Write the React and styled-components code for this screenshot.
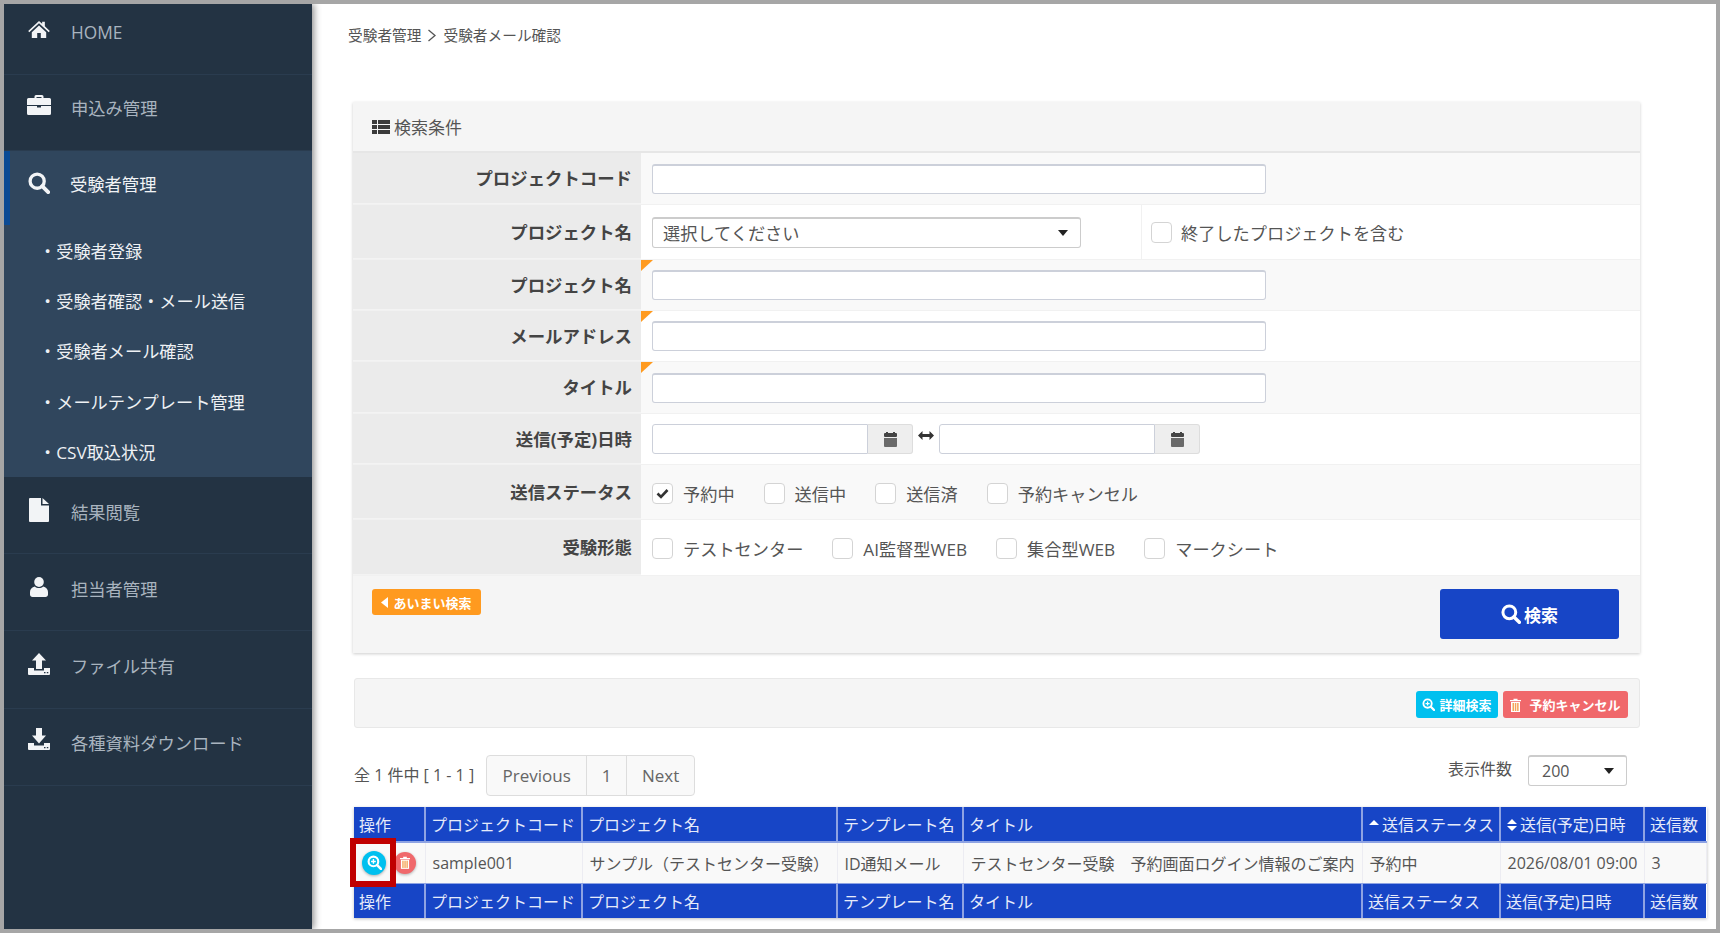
import React from 'react';
import styled, { createGlobalStyle } from 'styled-components';

const GlobalStyle = createGlobalStyle`
  html, body { margin: 0; padding: 0; background: #fff; }
  body {
    font-family: "Open Sans", "Noto Sans CJK JP", sans-serif;
    font-size: 16px;
    color: #555;
  }
  * { box-sizing: border-box; }
`;

const Frame = styled.div`
  width: 1720px;
  height: 933px;
  border: 4px solid #a6a6a6;
  display: flex;
  overflow: hidden;
  background: #fff;
`;

const Sidebar = styled.nav`
  width: 308px;
  flex: none;
  background: #233343;
  box-shadow: 2px 0 7px rgba(0, 0, 0, 0.45);
  position: relative;
  z-index: 2;
`;

const NavItem = styled.div`
  height: ${(p) => p.$h}px;
  display: flex;
  align-items: flex-start;
  border-bottom: ${(p) => (p.$active ? 'none' : '1px solid #2a3c4f')};
  border-left: ${(p) => (p.$active ? '6px solid #0a4a94' : 'none')};
  padding-left: ${(p) => (p.$active ? '17px' : '23px')};
  color: ${(p) => (p.$active ? '#f0f3f6' : '#a9b4bf')};
  font-size: 17.3px;
  line-height: 26px;
`;

const IconSlot = styled.span`
  width: 24px;
  height: 24px;
  margin-top: ${(p) => p.$top}px;
  flex: none;
  display: flex;
  align-items: center;
  justify-content: center;
  color: #f2f4f6;
  svg { display: block; fill: currentColor; }
`;

const NavText = styled.span`
  margin: ${(p) => p.$top}px 0 0 ${(p) => p.$left || 20}px;
`;

const ActiveGroup = styled.div`
  background: #30465d;
  height: 326px;
`;

const SubItem = styled.div`
  height: 50.4px;
  padding-left: 35px;
  display: flex;
  align-items: center;
  color: #eef1f4;
  font-size: 17.2px;
`;

const Main = styled.main`
  flex: 1;
  min-width: 0;
  padding: 0 0 0 36px;
`;

const Breadcrumb = styled.div`
  height: 98px;
  padding-top: 19px;
  font-size: 14.7px;
  line-height: 24px;
  color: #555;
  display: flex;
  align-items: flex-start;
  gap: 6px;
  svg { display: block; margin-top: 6px; }
`;

const Content = styled.div`
  padding-left: 5px;
`;

const SearchPanel = styled.section`
  width: 1287px;
  background: #f5f5f5;
  box-shadow: 0 1px 3px rgba(0, 0, 0, 0.2);
`;

const PanelHead = styled.div`
  height: 51px;
  padding-left: 19px;
  display: flex;
  align-items: center;
  gap: 4px;
  font-size: 17px;
  color: #555;
  border-bottom: 2px solid #e6e6e6;
  svg { display: block; }
`;

const FormRow = styled.div`
  display: grid;
  grid-template-columns: 288px 1fr;
  height: ${(p) => p.$h}px;
  background: ${(p) => (p.$odd ? '#f9f9f9' : '#fff')};
  border-bottom: 1px solid #f1f1f1;
`;

const FormLabel = styled.div`
  background: #ebebeb;
  border-bottom: 1px solid #f3f3f3;
  display: flex;
  align-items: center;
  justify-content: flex-end;
  padding: 0 9px 1px 0;
  font-size: 17.4px;
  font-weight: 700;
  color: #444;
`;

const FormValue = styled.div`
  position: relative;
  display: flex;
  align-items: center;
  padding-left: 11px;
  &::before {
    content: ${(p) => (p.$corner ? '""' : 'none')};
    position: absolute;
    left: 0;
    top: 0;
    border-style: solid;
    border-width: 11px 12px 0 0;
    border-color: #ff9a1f transparent transparent transparent;
  }
`;

const TextInput = styled.input`
  width: 614px;
  height: 30px;
  border: 1px solid #ccd0da;
  border-top-width: 2px;
  border-radius: 3px;
  background: #fff;
  padding: 0 10px;
  outline: none;
`;

const SelectBox = styled.div`
  width: ${(p) => p.$w}px;
  height: 31px;
  border: 1px solid #ccc;
  border-top-width: 2px;
  border-radius: 3px;
  background: #fff;
  display: flex;
  align-items: center;
  justify-content: space-between;
  padding: 0 ${(p) => p.$pr}px 0 ${(p) => p.$pl}px;
  font-size: ${(p) => p.$fs}px;
  color: #555;
  &::after {
    content: "";
    border-style: solid;
    border-width: 6px 5px 0 5px;
    border-color: #222 transparent transparent transparent;
  }
`;

const EndedCell = styled.div`
  margin-left: 60px;
  height: 100%;
  padding-left: 9px;
  border-left: 1px solid #f1f1f1;
  display: flex;
  align-items: center;
`;

const DateGroup = styled.div`
  display: flex;
  align-items: center;
`;

const DateInput = styled.input`
  width: 216px;
  height: 30px;
  border: 1px solid #ccd0da;
  border-radius: 3px 0 0 3px;
  background: #fff;
  outline: none;
`;

const DateAddon = styled.span`
  width: 45px;
  height: 30px;
  background: #eee;
  border: 1px solid #ddd;
  border-left: none;
  border-radius: 0 3px 3px 0;
  display: flex;
  align-items: center;
  justify-content: center;
`;

const RangeMark = styled.span`
  width: 26px;
  display: flex;
  justify-content: center;
  margin-top: -7px;
  svg { display: block; }
`;

const CheckRow = styled.div`
  display: flex;
  align-items: center;
  padding-top: 2px;
`;

const CheckItem = styled.label`
  display: flex;
  align-items: center;
  margin-right: ${(p) => p.$mr}px;
  font-size: 17.2px;
  color: #555;
`;

const CheckBox = styled.span`
  width: 21px;
  height: 21px;
  border: 1px solid #d4d4d4;
  border-radius: 4px;
  background: #fff;
  margin-right: ${(p) => p.$gap || 10}px;
  flex: none;
  display: flex;
  align-items: center;
  justify-content: center;
  svg { display: block; }
`;

const PanelFoot = styled.div`
  height: 77px;
  padding: 13px 21px 0 19px;
  display: flex;
  justify-content: space-between;
  align-items: flex-start;
`;

const SmallButton = styled.button`
  height: ${(p) => p.$h || 27}px;
  width: ${(p) => p.$w}px;
  background: ${(p) => p.$bg};
  color: #fff;
  border: none;
  border-radius: 3px;
  font-family: inherit;
  font-size: 13px;
  font-weight: 700;
  padding: 0;
  display: flex;
  align-items: center;
  justify-content: center;
  gap: ${(p) => p.$gap || 4}px;
  svg { display: block; }
`;

const SearchButton = styled.button`
  width: 179px;
  height: 50px;
  background: #1745c6;
  color: #fff;
  border: none;
  border-radius: 3px;
  font-family: inherit;
  font-size: 17px;
  font-weight: 700;
  padding: 0;
  display: flex;
  align-items: center;
  justify-content: center;
  gap: 3px;
  svg { display: block; }
`;

const ActionPanel = styled.div`
  width: 1286px;
  height: 50px;
  margin: 25px 0 0 1px;
  background: #f5f5f5;
  border: 1px solid #e8e8e8;
  border-radius: 3px;
  padding: 12px 11px 0 0;
  display: flex;
  justify-content: flex-end;
  gap: 5px;
`;

const PagerRow = styled.div`
  width: 1273px;
  margin: 27px 0 0 1px;
  display: flex;
  justify-content: space-between;
  align-items: flex-start;
`;

const PagerLeft = styled.div`
  display: flex;
  align-items: center;
  gap: 12px;
  font-size: 16px;
  color: #555;
`;

const PagerCount = styled.span`
  margin-top: -3px;
`;

const Pagination = styled.div`
  display: flex;
  height: 41px;
  border: 1px solid #ddd;
  border-radius: 4px;
  background: #f9f9f9;
`;

const PageLink = styled.span`
  width: ${(p) => p.$w}px;
  display: flex;
  align-items: center;
  justify-content: center;
  font-size: 17px;
  color: #666;
  border-left: ${(p) => (p.$first ? 'none' : '1px solid #ddd')};
`;

const PagerRight = styled.div`
  display: flex;
  align-items: flex-start;
  gap: 16px;
  font-size: 16px;
`;

const PerPageLabel = styled.span`
  line-height: 28px;
`;

const ResultTable = styled.table`
  width: 1352px;
  margin: 11px 0 0 1px;
  border-collapse: collapse;
  table-layout: fixed;
  box-shadow: 0 1px 3px rgba(0, 0, 0, 0.25);
`;

const HeadCell = styled.th`
  height: 35px;
  background: #1745c6;
  color: #e6ebfa;
  font-size: 16px;
  font-weight: 400;
  text-align: left;
  padding: 0 0 0 5px;
  white-space: nowrap;
  overflow: hidden;
  border-right: 2px solid #8ea3e3;
  &:last-child { border-right: none; }
`;

const SortMark = styled.svg`
  display: inline-block;
  width: 10px;
  height: 14px;
  margin: 0 3px 0 1px;
  vertical-align: -1px;
  fill: #fff;
`;

const BodyCell = styled.td`
  height: 41px;
  background: #f9f9f9;
  padding: 0 0 0 7px;
  font-size: 16px;
  color: #555;
  white-space: nowrap;
  overflow: hidden;
  border-right: 1px solid #ececf2;
  border-top: 2px solid #8ea3e3;
  border-bottom: 1px solid #8ea3e3;
`;

const OpCell = styled(BodyCell)`
  position: relative;
  overflow: visible;
  padding-left: 8px;
`;

const OpButtons = styled.div`
  display: flex;
  align-items: center;
  gap: 8px;
`;

const RoundButton = styled.span`
  width: ${(p) => p.$size}px;
  height: ${(p) => p.$size}px;
  border-radius: 50%;
  background: ${(p) => p.$bg};
  box-shadow: 0 1px 3px rgba(0, 0, 0, 0.3);
  display: flex;
  align-items: center;
  justify-content: center;
  svg { display: block; }
`;

const Highlight = styled.span`
  position: absolute;
  left: -4px;
  top: -5px;
  width: 46px;
  height: 49px;
  border: 6px solid #c00000;
`;

const HomeIcon = () => (
  <svg width="22" height="18" viewBox="0 0 24 20">
    <path d="M12 1l3.500 3.200V2h3v5l5.500 5.200-1.200 1.300L12 3.600 1.200 13.500 0 12.200z" />
    <path d="M4 13.500l8-7.300 8 7.300V20h-6v-5.500h-4V20H4z" />
  </svg>
);

const CaseIcon = () => (
  <svg width="24" height="20" viewBox="0 0 24 20">
    <path d="M7.500 3V1.500A1.500 1.500 0 0 1 9 0h6a1.500 1.500 0 0 1 1.500 1.500V3h-2V2h-5v1z" />
    <path d="M0 4.500A1.500 1.500 0 0 1 1.500 3h21A1.500 1.500 0 0 1 24 4.500V10H0z" />
    <path d="M0 11h10v1.500h4V11h10v7.500a1.500 1.500 0 0 1-1.500 1.500h-21A1.500 1.500 0 0 1 0 18.500z" />
  </svg>
);

const LensIcon = ({ size = 22 }) => (
  <svg width={size} height={size} viewBox="0 0 24 24">
    <circle cx="10" cy="10" r="7.700" fill="none" stroke="currentColor" strokeWidth="3.600" />
    <path d="M15.500 15.500L22 22" fill="none" stroke="currentColor" strokeWidth="4.200" strokeLinecap="round" />
  </svg>
);

const FileIcon = () => (
  <svg width="20" height="24" viewBox="0 0 20 24">
    <path d="M1 0h11v7.500h8V23a1 1 0 0 1-1 1H1a1 1 0 0 1-1-1V1a1 1 0 0 1 1-1z" />
    <path d="M13.500 0L20 6h-6.500z" />
  </svg>
);

const UserIcon = () => (
  <svg width="18" height="20" viewBox="0 0 18 20">
    <ellipse cx="9" cy="5" rx="4.800" ry="5" />
    <path d="M4.800 9.500c2.300 2 6.100 2 8.400 0C16 10.200 18 12 18 15v2.500c0 1.400-1.100 2.500-2.500 2.500h-13C1.100 20 0 18.900 0 17.500V15c0-3 2-4.800 4.800-5.500z" />
  </svg>
);

const Tray = () => (
  <path
    fillRule="evenodd"
    d="M0 15h6v2.500h10V15h6v6a1 1 0 0 1-1 1H1a1 1 0 0 1-1-1zM16 19v1.200h1.500V19zM18.800 19v1.200h1.500V19z"
  />
);

const UploadIcon = () => (
  <svg width="22" height="22" viewBox="0 0 22 22">
    <path d="M11 0l7 7.500h-4V16H8V7.500H4z" />
    <Tray />
  </svg>
);

const DownloadIcon = () => (
  <svg width="22" height="22" viewBox="0 0 22 22">
    <path d="M8 0h6v7.500h4L11 15.500 4 7.500h4z" />
    <Tray />
  </svg>
);

const ListIcon = () => (
  <svg width="18" height="14" viewBox="0 0 18 14" fill="#3a3a3a">
    <rect x="0" y="0" width="5" height="4" />
    <rect x="6" y="0" width="12" height="4" />
    <rect x="0" y="5" width="5" height="4" />
    <rect x="6" y="5" width="12" height="4" />
    <rect x="0" y="10" width="5" height="4" />
    <rect x="6" y="10" width="12" height="4" />
  </svg>
);

const CalendarIcon = () => (
  <svg width="13" height="15" viewBox="0 0 13 15" fill="#444">
    <rect x="2" y="0" width="2" height="2" />
    <rect x="9" y="0" width="2" height="2" />
    <rect x="0" y="1" width="13" height="4" rx="1" />
    <path d="M0 6h13v8a1 1 0 0 1-1 1H1a1 1 0 0 1-1-1z" fill="#6a6a6a" />
  </svg>
);

const RangeIcon = () => (
  <svg width="16" height="9" viewBox="0 0 16 9" fill="#333">
    <path d="M0 4.500L4.500 0v3h7V0L16 4.500 11.500 9V6h-7v3z" />
  </svg>
);

const ChevronIcon = () => (
  <svg width="10" height="13" viewBox="0 0 10 13">
    <path d="M1.500 1l6.500 5.500-6.500 5.500" fill="none" stroke="#555" strokeWidth="1.300" />
  </svg>
);

const TrashIcon = ({ w = 11, h = 14 }) => (
  <svg width={w} height={h} viewBox="0 0 11 14">
    <path d="M0 2h3.500V.7h4V2H11v1.300H0z" fill="#fff" />
    <rect x="1" y="4" width="9" height="10" fill="#fff" />
    <rect x="2.500" y="5" width="1.500" height="8" fill="#f5a45a" />
    <rect x="4.800" y="5" width="1.500" height="8" fill="#f5a45a" />
    <rect x="7.100" y="5" width="1.500" height="8" fill="#f5a45a" />
  </svg>
);

const ZoomPlusIcon = ({ size = 13 }) => (
  <svg width={size} height={size} viewBox="0 0 14 14">
    <circle cx="6" cy="6" r="4.500" fill="none" stroke="#fff" strokeWidth="2" />
    <path d="M9.500 9.500L13 13" stroke="#fff" strokeWidth="2.400" strokeLinecap="round" />
    <path d="M3.800 6h4.400M6 3.800v4.400" stroke="#fff" strokeWidth="1.300" />
  </svg>
);

const CheckMark = () => (
  <svg width="13" height="11" viewBox="0 0 13 11">
    <path d="M1.500 5.500L5 9l6.500-7" fill="none" stroke="#333" strokeWidth="2.600" />
  </svg>
);

const BackArrow = () => (
  <svg width="7" height="11" viewBox="0 0 7 11" fill="#fff">
    <path d="M7 0v11L0 5.500z" />
  </svg>
);

const SortUp = () => (
  <SortMark viewBox="0 0 10 14">
    <path d="M0 7l5-5 5 5z" />
  </SortMark>
);

const SortBoth = () => (
  <SortMark viewBox="0 0 10 14">
    <path d="M0 6l5-5 5 5zM0 8h10l-5 5z" />
  </SortMark>
);

const navTop = [
  { label: 'HOME', icon: <HomeIcon />, h: 71, iy: 13, ty: 16 },
  { label: '申込み管理', icon: <CaseIcon />, h: 76, iy: 18, ty: 21 },
];

const subItems = ['・受験者登録', '・受験者確認・メール送信', '・受験者メール確認', '・メールテンプレート管理', '・CSV取込状況'];

const navBottom = [
  { label: '結果閲覧', icon: <FileIcon />, h: 77, iy: 21, ty: 23 },
  { label: '担当者管理', icon: <UserIcon />, h: 77, iy: 21, ty: 23 },
  { label: 'ファイル共有', icon: <UploadIcon />, h: 78, iy: 21, ty: 23 },
  { label: '各種資料ダウンロード', icon: <DownloadIcon />, h: 77, iy: 18, ty: 22 },
];

const colWidths = [71, 157, 255, 126, 399, 138, 144, 62];

const heads = ['操作', 'プロジェクトコード', 'プロジェクト名', 'テンプレート名', 'タイトル', '送信ステータス', '送信(予定)日時', '送信数'];

export default function App() {
  return (
    <>
      <GlobalStyle />
      <Frame>
        <Sidebar>
          {navTop.map((n) => (
            <NavItem key={n.label} $h={n.h}>
              <IconSlot $top={n.iy}>{n.icon}</IconSlot>
              <NavText $top={n.ty}>{n.label}</NavText>
            </NavItem>
          ))}
          <ActiveGroup>
            <NavItem $h={74} $active>
              <IconSlot $top={20}><LensIcon /></IconSlot>
              <NavText $top={21} $left={19}>受験者管理</NavText>
            </NavItem>
            {subItems.map((s) => (
              <SubItem key={s}>{s}</SubItem>
            ))}
          </ActiveGroup>
          {navBottom.map((n) => (
            <NavItem key={n.label} $h={n.h}>
              <IconSlot $top={n.iy}>{n.icon}</IconSlot>
              <NavText $top={n.ty}>{n.label}</NavText>
            </NavItem>
          ))}
        </Sidebar>

        <Main>
          <Breadcrumb>
            <span>受験者管理</span>
            <ChevronIcon />
            <span>受験者メール確認</span>
          </Breadcrumb>
          <Content>
            <SearchPanel>
              <PanelHead>
                <ListIcon />
                検索条件
              </PanelHead>
              <FormRow $h={52} $odd>
                <FormLabel>プロジェクトコード</FormLabel>
                <FormValue><TextInput /></FormValue>
              </FormRow>
              <FormRow $h={55}>
                <FormLabel>プロジェクト名</FormLabel>
                <FormValue>
                  <SelectBox $w={429} $pl={10} $pr={12} $fs={17.2}>選択してください</SelectBox>
                  <EndedCell>
                    <CheckItem $mr={0}>
                      <CheckBox $gap={9} />
                      終了したプロジェクトを含む
                    </CheckItem>
                  </EndedCell>
                </FormValue>
              </FormRow>
              <FormRow $h={51} $odd>
                <FormLabel>プロジェクト名</FormLabel>
                <FormValue $corner><TextInput /></FormValue>
              </FormRow>
              <FormRow $h={51}>
                <FormLabel>メールアドレス</FormLabel>
                <FormValue $corner><TextInput /></FormValue>
              </FormRow>
              <FormRow $h={52} $odd>
                <FormLabel>タイトル</FormLabel>
                <FormValue $corner><TextInput /></FormValue>
              </FormRow>
              <FormRow $h={51}>
                <FormLabel>送信(予定)日時</FormLabel>
                <FormValue>
                  <DateGroup>
                    <DateInput />
                    <DateAddon><CalendarIcon /></DateAddon>
                    <RangeMark><RangeIcon /></RangeMark>
                    <DateInput />
                    <DateAddon><CalendarIcon /></DateAddon>
                  </DateGroup>
                </FormValue>
              </FormRow>
              <FormRow $h={55} $odd>
                <FormLabel>送信ステータス</FormLabel>
                <FormValue>
                  <CheckRow>
                    <CheckItem $mr={29}><CheckBox><CheckMark /></CheckBox>予約中</CheckItem>
                    <CheckItem $mr={29}><CheckBox />送信中</CheckItem>
                    <CheckItem $mr={29}><CheckBox />送信済</CheckItem>
                    <CheckItem $mr={0}><CheckBox />予約キャンセル</CheckItem>
                  </CheckRow>
                </FormValue>
              </FormRow>
              <FormRow $h={56}>
                <FormLabel>受験形態</FormLabel>
                <FormValue>
                  <CheckRow>
                    <CheckItem $mr={29}><CheckBox />テストセンター</CheckItem>
                    <CheckItem $mr={29}><CheckBox />AI監督型WEB</CheckItem>
                    <CheckItem $mr={29}><CheckBox />集合型WEB</CheckItem>
                    <CheckItem $mr={0}><CheckBox />マークシート</CheckItem>
                  </CheckRow>
                </FormValue>
              </FormRow>
              <PanelFoot>
                <SmallButton $w={109} $h={26} $bg="#ff9a1f" $gap={5}>
                  <BackArrow />
                  あいまい検索
                </SmallButton>
                <SearchButton>
                  <LensIcon size={20} />
                  検索
                </SearchButton>
              </PanelFoot>
            </SearchPanel>

            <ActionPanel>
              <SmallButton $w={82} $bg="#00c0ef">
                <ZoomPlusIcon />
                詳細検索
              </SmallButton>
              <SmallButton $w={125} $bg="#f0686b" $gap={8}>
                <TrashIcon />
                予約キャンセル
              </SmallButton>
            </ActionPanel>

            <PagerRow>
              <PagerLeft>
                <PagerCount>全 1 件中 [ 1 - 1 ]</PagerCount>
                <Pagination>
                  <PageLink $w={99} $first>Previous</PageLink>
                  <PageLink $w={40}>1</PageLink>
                  <PageLink $w={68}>Next</PageLink>
                </Pagination>
              </PagerLeft>
              <PagerRight>
                <PerPageLabel>表示件数</PerPageLabel>
                <SelectBox $w={99} $pl={13} $pr={12} $fs={16}>200</SelectBox>
              </PagerRight>
            </PagerRow>

            <ResultTable>
              <colgroup>
                {colWidths.map((w, i) => (
                  <col key={i} width={w} />
                ))}
              </colgroup>
              <thead>
                <tr>
                  {heads.map((h, i) => (
                    <HeadCell key={h}>
                      {i === 5 && <SortUp />}
                      {i === 6 && <SortBoth />}
                      {h}
                    </HeadCell>
                  ))}
                </tr>
              </thead>
              <tbody>
                <tr>
                  <OpCell>
                    <OpButtons>
                      <RoundButton $size={24} $bg="#00c0ef"><ZoomPlusIcon size={15} /></RoundButton>
                      <RoundButton $size={22} $bg="#f0686b"><TrashIcon w={10} h={13} /></RoundButton>
                    </OpButtons>
                    <Highlight />
                  </OpCell>
                  <BodyCell>sample001</BodyCell>
                  <BodyCell>サンプル（テストセンター受験）</BodyCell>
                  <BodyCell>ID通知メール</BodyCell>
                  <BodyCell>テストセンター受験　予約画面ログイン情報のご案内</BodyCell>
                  <BodyCell>予約中</BodyCell>
                  <BodyCell>2026/08/01 09:00</BodyCell>
                  <BodyCell>3</BodyCell>
                </tr>
              </tbody>
              <tfoot>
                <tr>
                  {heads.map((h) => (
                    <HeadCell key={h}>{h}</HeadCell>
                  ))}
                </tr>
              </tfoot>
            </ResultTable>
          </Content>
        </Main>
      </Frame>
    </>
  );
}
